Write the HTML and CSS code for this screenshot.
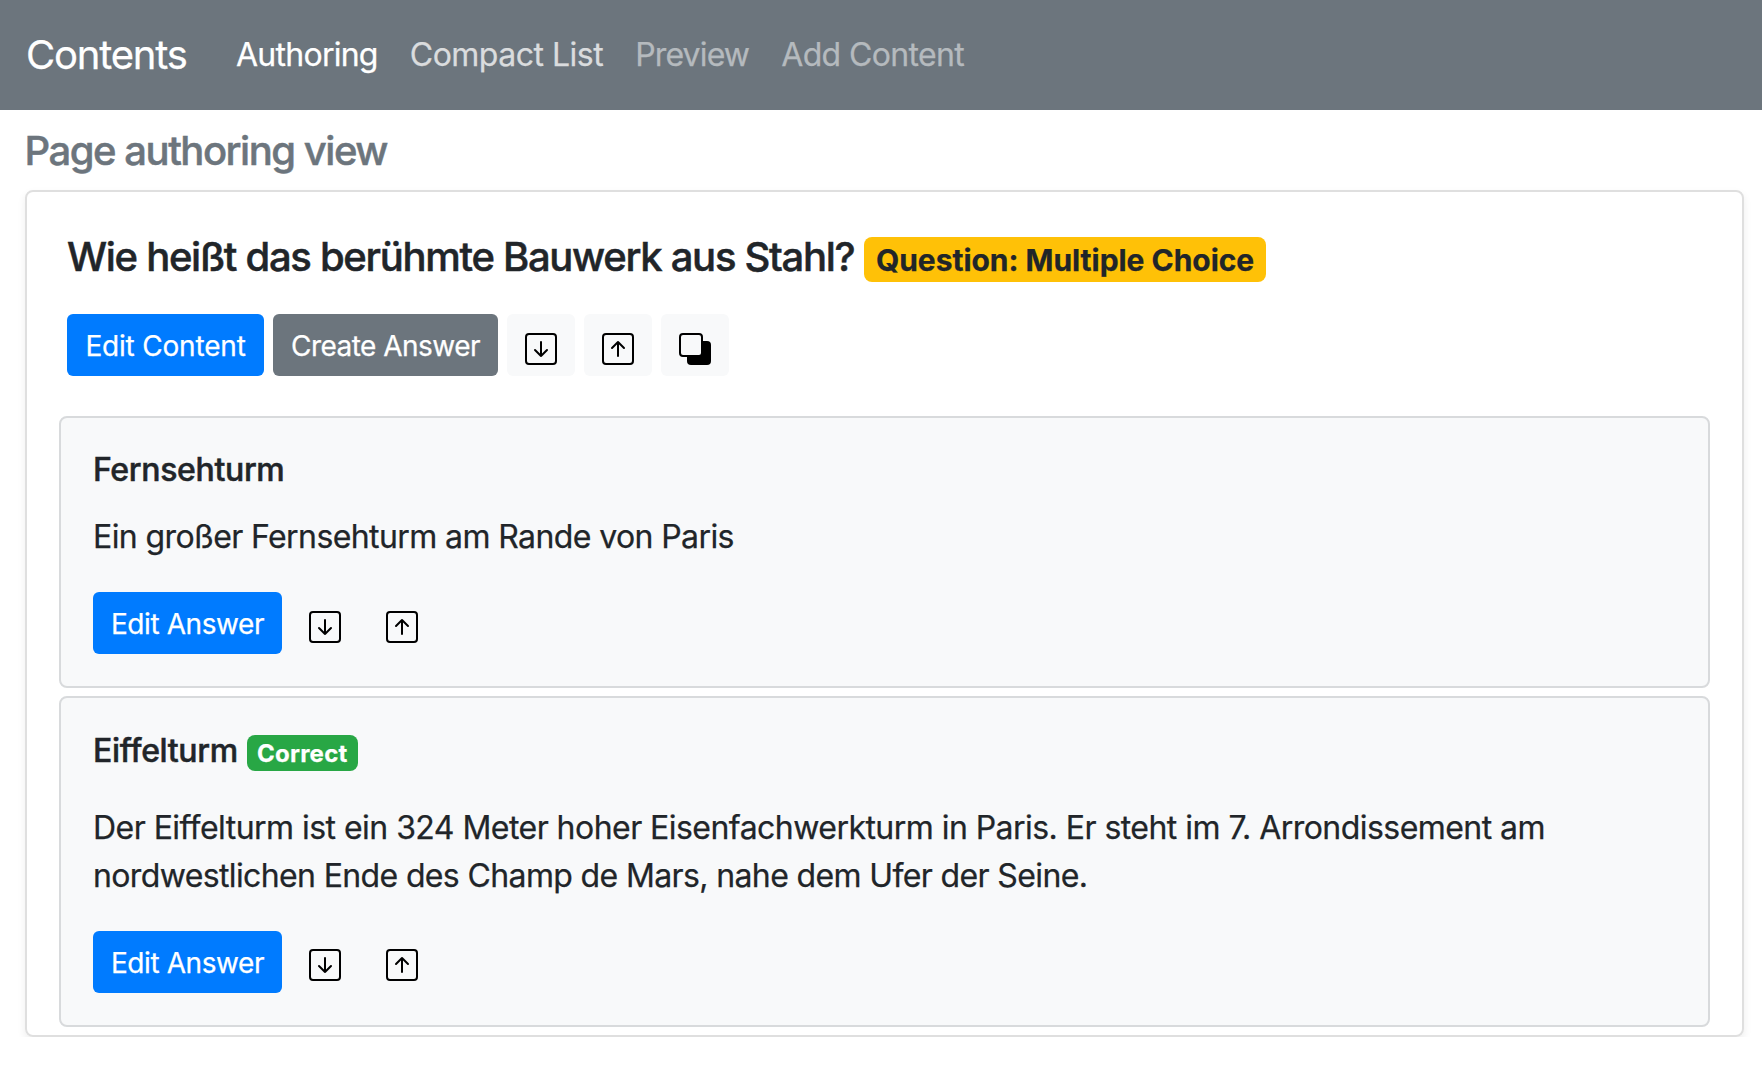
FILE: index.html
```html
<!DOCTYPE html>
<html lang="de">
<head>
<meta charset="utf-8">
<title>Page authoring view</title>
<link rel="stylesheet" href="styles.css">
</head>
<body>
<svg class="sprite" aria-hidden="true">
  <symbol id="arrow-down" viewBox="0 0 16 16"><rect x=".5" y=".5" width="15" height="15" rx="1.5"/><path d="M8 4.5v7M5 8.5l3 3 3-3"/></symbol>
  <symbol id="arrow-up" viewBox="0 0 16 16"><rect x=".5" y=".5" width="15" height="15" rx="1.5"/><path d="M8 11.5v-7M5 7.5l3-3 3 3"/></symbol>
  <symbol id="layers" viewBox="0 0 16 16"><rect x="4" y="4" width="12" height="12" rx="2" fill="#000" stroke="none"/><rect x=".5" y=".5" width="11" height="11" rx="1.5" fill="#f8f9fa"/></symbol>
</svg>
<nav class="navbar">
  <a class="brand">Contents</a>
  <a class="nav-link nav-authoring active">Authoring</a>
  <a class="nav-link nav-list">Compact List</a>
  <a class="nav-link nav-preview disabled">Preview</a>
  <a class="nav-link nav-add disabled">Add Content</a>
</nav>
<main class="page">
  <h1 class="page-title">Page authoring view</h1>
  <section class="card">
    <header class="question">
      <h2 class="question-title"><span class="question-name">Wie heißt das berühmte Bauwerk aus Stahl?</span> <span class="badge badge-type">Question: Multiple Choice</span></h2>
      <div class="actions">
        <button class="btn btn-primary btn-edit">Edit Content</button>
        <button class="btn btn-secondary">Create Answer</button>
        <button class="btn btn-icon"><svg><use href="#arrow-down"/></svg></button>
        <button class="btn btn-icon"><svg><use href="#arrow-up"/></svg></button>
        <button class="btn btn-icon"><svg><use href="#layers"/></svg></button>
      </div>
    </header>
    <article class="answer">
      <h3 class="answer-title">Fernsehturm</h3>
      <p class="answer-text">Ein großer Fernsehturm am Rande von Paris</p>
      <div class="actions">
        <button class="btn btn-primary btn-answer">Edit Answer</button>
        <button class="btn btn-icon"><svg><use href="#arrow-down"/></svg></button>
        <button class="btn btn-icon"><svg><use href="#arrow-up"/></svg></button>
      </div>
    </article>
    <article class="answer answer-correct">
      <h3 class="answer-title">Eiffelturm <span class="badge badge-correct">Correct</span></h3>
      <p class="answer-text"><span class="lead-line">Der Eiffelturm ist ein 324 Meter hoher Eisenfachwerkturm in Paris. Er steht im 7. Arrondissement am</span><br>nordwestlichen Ende des Champ de Mars, nahe dem Ufer der Seine.</p>
      <div class="actions">
        <button class="btn btn-primary btn-answer">Edit Answer</button>
        <button class="btn btn-icon"><svg><use href="#arrow-down"/></svg></button>
        <button class="btn btn-icon"><svg><use href="#arrow-up"/></svg></button>
      </div>
    </article>
  </section>
</main>
</body>
</html>
```
FILE: styles.css
```css
* { box-sizing: border-box; }
body {
  margin: 0;
  background: #fff;
  color: #212529;
  font: 400 32px/48px Inter, "Liberation Sans", sans-serif;
  font-variant-ligatures: none;
  -webkit-text-stroke: .25px;
}
h1, h2, h3, p { margin: 0; }
h1, h2, h3 { -webkit-text-stroke: .5px; }
.sprite { display: none; }
svg { fill: none; stroke: #000; stroke-linecap: round; stroke-linejoin: round; }

/* Navigation */
.navbar {
  display: flex;
  align-items: center;
  height: 110px;
  padding: 0 26px;
  background: #6c757d;
  white-space: nowrap;
}
.brand { width: 210px; color: #fff; font-size: 40px; letter-spacing: -1.2px; }
.nav-link { margin-right: 32px; color: #dadcde; }
.nav-link.active { color: #fff; }
.nav-link.disabled { color: #b5babe; }
.nav-authoring { letter-spacing: -.74px; }
.nav-list { letter-spacing: -.5px; }
.nav-preview { letter-spacing: -.85px; }
.nav-add { letter-spacing: -.64px; }

/* Page and question card */
.page { padding: 17px 18px 0 25px; }
.page-title {
  height: 63px;
  margin-left: -.5px;
  color: #6c757d;
  font-size: 40px;
  font-weight: 500;
  line-height: 48px;
  letter-spacing: -1.47px;
}
.card {
  height: 847px;
  padding: 41px 32px 0;
  border: 2px solid #dfdfdf;
  border-radius: 8px;
  box-shadow: 0 4px 8px rgba(0, 0, 0, .075);
}
.question { height: 183px; padding-left: 8px; }
.question-title { height: 81px; font-size: 40px; font-weight: 500; line-height: 48px; white-space: nowrap; }
.question-name { letter-spacing: -1.3px; }

/* Badges */
.badge { display: inline-block; font-weight: 700; line-height: 1; border-radius: 8px; -webkit-text-stroke: .25px; }
.badge-type {
  height: 45px;
  margin-left: -1px;
  padding: 8px 12px;
  background: #ffc107;
  font-size: 30px;
  letter-spacing: -.04px;
}
.badge-correct {
  height: 36px;
  margin-left: 1px;
  padding: 7px 10px;
  background: #28a745;
  color: #fff;
  font-size: 24px;
  letter-spacing: .25px;
}

/* Buttons */
.actions { display: flex; gap: 9px; }
.btn {
  height: 62px;
  padding: 2px 0 0;
  border: 0;
  border-radius: 6px;
  color: #fff;
  font: 400 28px/42px Inter, "Liberation Sans", sans-serif;
  white-space: nowrap;
  -webkit-text-stroke: .25px;
}
.btn-primary { background: #007bff; }
.btn-secondary { width: 225px; background: #6c757d; letter-spacing: -.52px; }
.btn-edit { width: 197px; letter-spacing: -.19px; }
.btn-answer { width: 189px; letter-spacing: -.41px; }
.btn-icon { width: 68px; padding: 8px 0 0; background: #f8f9fa; }
.btn-icon svg { display: block; width: 32px; height: 32px; margin: 0 auto; }

/* Answers */
.answer {
  height: 272px;
  margin-bottom: 8px;
  padding: 33px 32px 0;
  border: 2px solid #d8dadc;
  border-radius: 8px;
  background: #f8f9fa;
}
.answer-title { height: 62px; font-size: 32px; font-weight: 500; line-height: 38px; letter-spacing: -.34px; }
.answer-text { height: 79px; letter-spacing: -.6px; white-space: nowrap; }
.answer-correct { height: 331px; margin-bottom: 0; }
.answer-correct .answer-title { height: 73px; line-height: 40px; }
.answer-correct .answer-text { height: 127px; letter-spacing: -.63px; }
.answer-correct .lead-line { letter-spacing: -.54px; }
.answer-correct .btn-icon { padding-top: 6px; }
```
